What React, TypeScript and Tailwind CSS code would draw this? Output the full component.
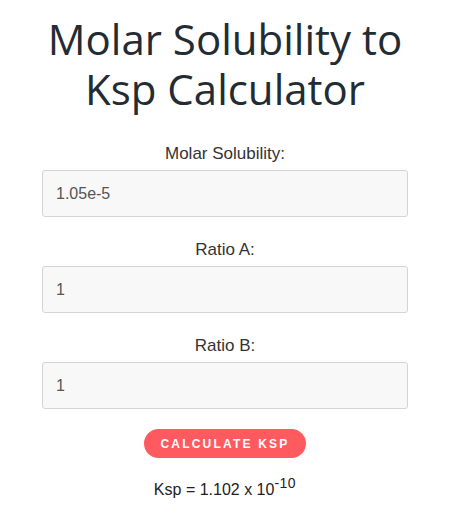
import React from "react";

export default function App() {
  const fields = [
    { label: "Molar Solubility:", value: "1.05e-5" },
    { label: "Ratio A:", value: "1" },
    { label: "Ratio B:", value: "1" },
  ];
  return (
    <div className="min-h-[523px] w-[456px] bg-white pl-[42px] pr-[48px] pt-[14px]" style={{ fontFamily: '"Liberation Sans", Arial, sans-serif' }}>
      <h1
        className="text-center text-[42px] leading-[50px] font-medium text-[#232b33]"
        style={{ fontFamily: '"Open Sans", "Noto Sans", sans-serif' }}
      >
        Molar Solubility to
        <br />
        Ksp Calculator
      </h1>
      <div className="mt-[30px] flex flex-col">
        {fields.map((f, i) => (
          <div key={i} className="flex flex-col">
            <label className="text-center text-[17px] leading-[20px] text-[#333]">{f.label}</label>
            <input
              readOnly
              value={f.value}
              className="mt-[6px] mb-[23px] h-[47px] w-[366px] rounded-[3px] border border-[#d4d4d4] bg-[#f8f8f8] px-[13px] text-[16px] text-[#555] outline-none"
            />
          </div>
        ))}
      </div>
      <div className="mt-[-3px] flex justify-center">
        <button className="h-[29px] w-[162px] rounded-full bg-[#ff5a5f] text-[12px] font-bold tracking-[2.2px] text-white">
          CALCULATE KSP
        </button>
      </div>
      <p className="mt-[20px] text-center text-[16px] text-[#222]">
        Ksp = 1.102 x 10<sup className="text-[14px] tracking-[0.5px]">-10</sup>
      </p>
    </div>
  );
}
